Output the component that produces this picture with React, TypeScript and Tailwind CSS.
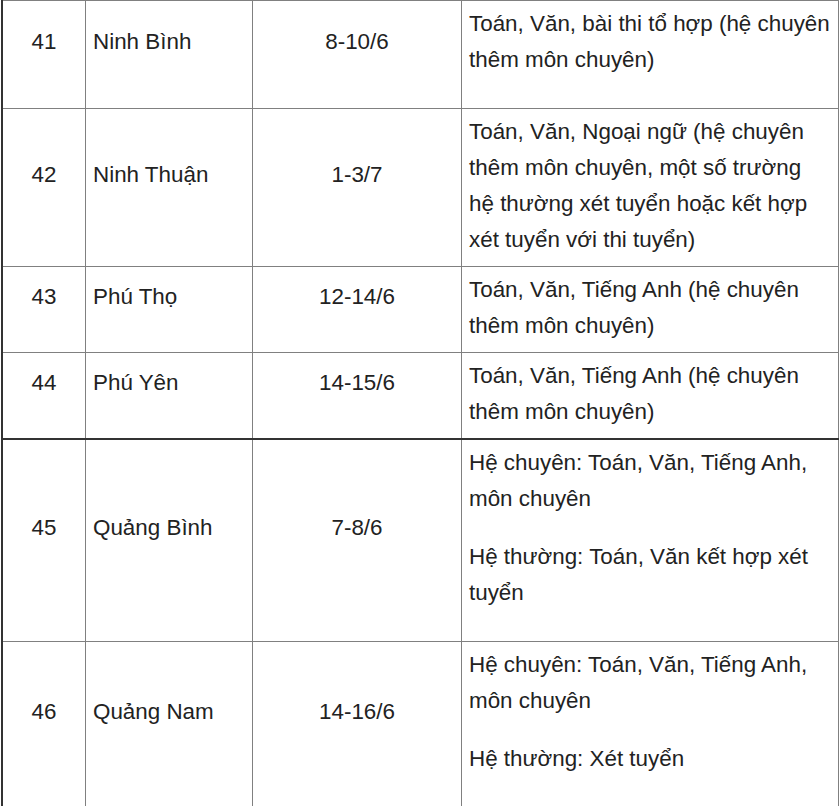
type Row = {
  no: string;
  name: string;
  date: string;
  paras: string[][];
  tail: boolean;
  thick?: boolean;
};

const rows: Row[] = [
  {
    no: '41',
    name: 'Ninh Bình',
    date: '8-10/6',
    paras: [['Toán, Văn, bài thi tổ hợp (hệ chuyên', 'thêm môn chuyên)']],
    tail: true,
  },
  {
    no: '42',
    name: 'Ninh Thuận',
    date: '1-3/7',
    paras: [
      [
        'Toán, Văn, Ngoại ngữ (hệ chuyên',
        'thêm môn chuyên, một số trường',
        'hệ thường xét tuyển hoặc kết hợp',
        'xét tuyển với thi tuyển)',
      ],
    ],
    tail: false,
  },
  {
    no: '43',
    name: 'Phú Thọ',
    date: '12-14/6',
    paras: [['Toán, Văn, Tiếng Anh (hệ chuyên', 'thêm môn chuyên)']],
    tail: false,
  },
  {
    no: '44',
    name: 'Phú Yên',
    date: '14-15/6',
    paras: [['Toán, Văn, Tiếng Anh (hệ chuyên', 'thêm môn chuyên)']],
    tail: false,
  },
  {
    no: '45',
    name: 'Quảng Bình',
    date: '7-8/6',
    paras: [
      ['Hệ chuyên: Toán, Văn, Tiếng Anh,', 'môn chuyên'],
      ['Hệ thường: Toán, Văn kết hợp xét', 'tuyển'],
    ],
    tail: true,
    thick: true,
  },
  {
    no: '46',
    name: 'Quảng Nam',
    date: '14-16/6',
    paras: [['Hệ chuyên: Toán, Văn, Tiếng Anh,', 'môn chuyên'], ['Hệ thường: Xét tuyển']],
    tail: true,
  },
];

const TableRow = ({ row }: { row: Row }) => {
  const top = row.thick ? 'border-t-2 border-t-[#333]' : 'border-t border-t-[#808080]';
  return (
    <div className={`flex ${top}`}>
      <div className="w-[83px] shrink-0 border-r border-[#808080] pt-[5px] pb-[8px] flex flex-col justify-center text-center">
        <p className="mb-[22px]">{row.no}</p>
      </div>
      <div className="w-[167px] shrink-0 border-r border-[#808080] pt-[5px] pb-[8px] pl-[7px] flex flex-col justify-center">
        <p className="mb-[22px] whitespace-nowrap">{row.name}</p>
      </div>
      <div className="w-[209px] shrink-0 border-r border-[#808080] pt-[5px] pb-[8px] flex flex-col justify-center text-center">
        <p className="mb-[22px]">{row.date}</p>
      </div>
      <div className="w-[377px] shrink-0 border-r border-[#808080] pt-[5px] pb-[8px] pl-[7px]">
        {row.paras.map((lines, i) => {
          const last = i === row.paras.length - 1;
          return (
            <p key={i} className={`whitespace-nowrap ${!last || row.tail ? 'mb-[22px]' : ''}`}>
              {lines.map((l, j) => (
                <span key={j} className="block">
                  {l}
                </span>
              ))}
            </p>
          );
        })}
      </div>
    </div>
  );
};

export default function App() {
  return (
    <div className="w-[840px] h-[806px] overflow-hidden bg-white">
      <div
        className="ml-px w-[838px] border-l-2 border-[#333] text-[22.4px] leading-[36px] text-[#222]"
        style={{ fontFamily: '"Liberation Sans", Arial, sans-serif' }}
      >
        {rows.map((r) => (
          <TableRow key={r.no} row={r} />
        ))}
      </div>
    </div>
  );
}
